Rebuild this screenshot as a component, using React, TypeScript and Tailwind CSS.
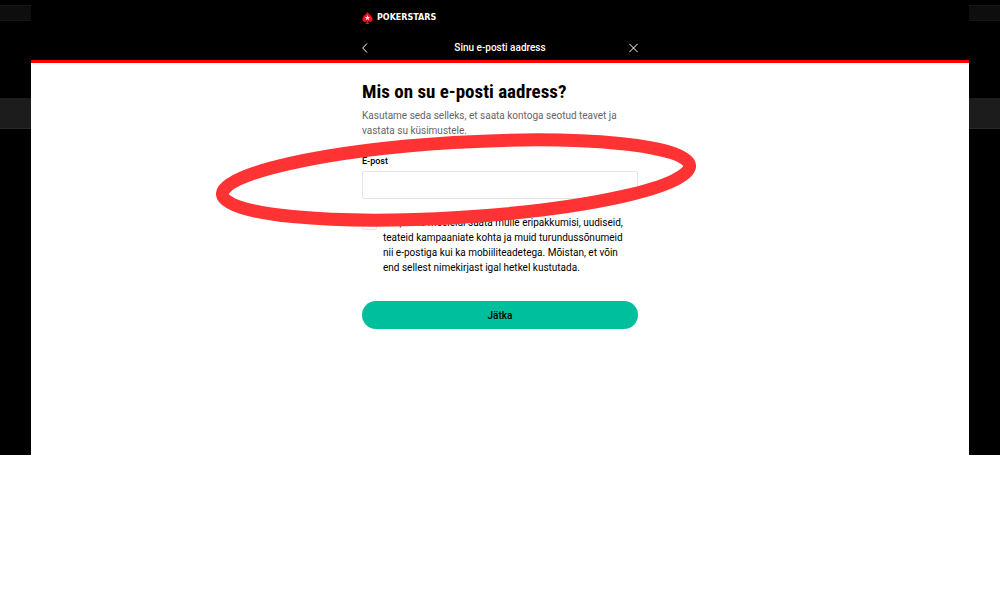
import type { FormEvent, ReactNode } from "react";

const SideStrip = ({ children }: { children?: ReactNode }) => (
  <div aria-hidden="true" className="flex w-[31px] shrink-0 flex-col bg-black pt-[5px]">
    <div className="h-4 border-y border-[#171717] bg-[#0e0e0e]" />
    <div className="mt-[77px] h-[31px] border-b border-[#2a2a2a] bg-[#1c1c1c]" />
    {children}
  </div>
);

const Logo = () => (
  <div className="flex items-center gap-1 text-white">
    <svg viewBox="0 0 22 26" className="h-3 w-[11px]" aria-hidden="true">
      <path d="M11 0C9 4 0 9 0 15.500c0 3.800 2.500 6 5.500 6 2 0 3.500-.8 4.500-2 0 2.500-1.200 4.500-3.500 6.500h9c-2.300-2-3.500-4-3.500-6.500 1 1.200 2.500 2 4.500 2 3 0 5.500-2.200 5.500-6C22 9 13 4 11 0z" fill="#f0121c" />
      <path d="M11 6.500l1.500 4.200 4.500.1-3.600 2.700 1.300 4.300-3.700-2.500-3.700 2.500 1.300-4.300-3.600-2.700 4.500-.1z" fill="#fff" />
    </svg>
    <span className="font-['DejaVu_Sans',sans-serif] text-[8px] leading-3 font-bold">POKERSTARS</span>
  </div>
);

const Marker = () => (
  <svg viewBox="0 0 480 94" className="pointer-events-none absolute -top-[5px] left-1/2 h-[94px] w-[480px] -translate-x-[284px]" aria-hidden="true">
    <ellipse cx="240" cy="47" rx="234" ry="37.500" transform="rotate(-3.500 240 47)" fill="none" stroke="#ff3333" strokeWidth="13" />
  </svg>
);

const EmailForm = () => {
  const handleSubmit = (e: FormEvent) => e.preventDefault();

  return (
    <form onSubmit={handleSubmit} className="mx-auto w-[276px] pt-[15px]">
      <h1 className="font-['Roboto_Condensed','Roboto',sans-serif] text-[19px] leading-7 font-bold">Mis on su e-posti aadress?</h1>
      <p className="mt-[2px] text-[10px] leading-[15px] text-[#666]">
        Kasutame seda selleks, et saata kontoga seotud teavet ja vastata su küsimustele.
      </p>
      <div className="relative pt-4">
        <label htmlFor="email" className="block text-[9px] leading-[15px] font-medium">E-post</label>
        <input id="email" type="email" className="mt-[2px] block h-7 w-full rounded-xs border border-[#e4e4e4] px-2 text-[10px] outline-none" />
        <Marker />
      </div>
      <div className="mt-4 flex gap-[6px] pr-1">
        <input id="offers" type="checkbox" className="size-[15px] shrink-0 appearance-none rounded-xs border border-[#e4e4e4] checked:bg-[#00bf9c]" />
        <label htmlFor="offers" className="text-[10px] leading-[15px]">
          Jah, võite meeleldi saata mulle eripakkumisi, uudiseid, teateid kampaaniate kohta ja muid turundussõnumeid nii e-postiga kui ka mobiiliteadetega. Mõistan, et võin end sellest nimekirjast igal hetkel kustutada.
        </label>
      </div>
      <button type="submit" className="mt-[26px] block h-7 w-full rounded-full bg-[#00bf9c] text-[10px] leading-[15px] font-medium">Jätka</button>
    </form>
  );
};

export default function App() {
  return (
    <div className="min-h-screen bg-white font-['Roboto',sans-serif] text-black">
      <div className="flex min-h-[455px]">
        <SideStrip />
        <main className="min-w-0 flex-1">
          <header className="border-b-3 border-[#f00] bg-black pt-3 text-white">
            <div className="mx-auto w-[276px]">
              <Logo />
              <div className="mt-4 flex h-5 items-start justify-between">
                <button type="button" aria-label="Tagasi" className="h-4 w-[9px]">
                  <svg viewBox="0 0 9 16" className="h-4 w-[9px]" fill="none" stroke="currentColor"><path d="M5 3.500L.7 8 5 12.500" /></svg>
                </button>
                <span className="text-[10px] leading-4 font-medium">Sinu e-posti aadress</span>
                <button type="button" aria-label="Sulge" className="h-4 w-[9px]">
                  <svg viewBox="0 0 9 16" className="h-4 w-[9px]" fill="none" stroke="currentColor"><path d="M.2 3.700l8.600 8.600M8.800 3.700L.2 12.300" /></svg>
                </button>
              </div>
            </div>
          </header>
          <EmailForm />
        </main>
        <SideStrip />
      </div>
    </div>
  );
}
